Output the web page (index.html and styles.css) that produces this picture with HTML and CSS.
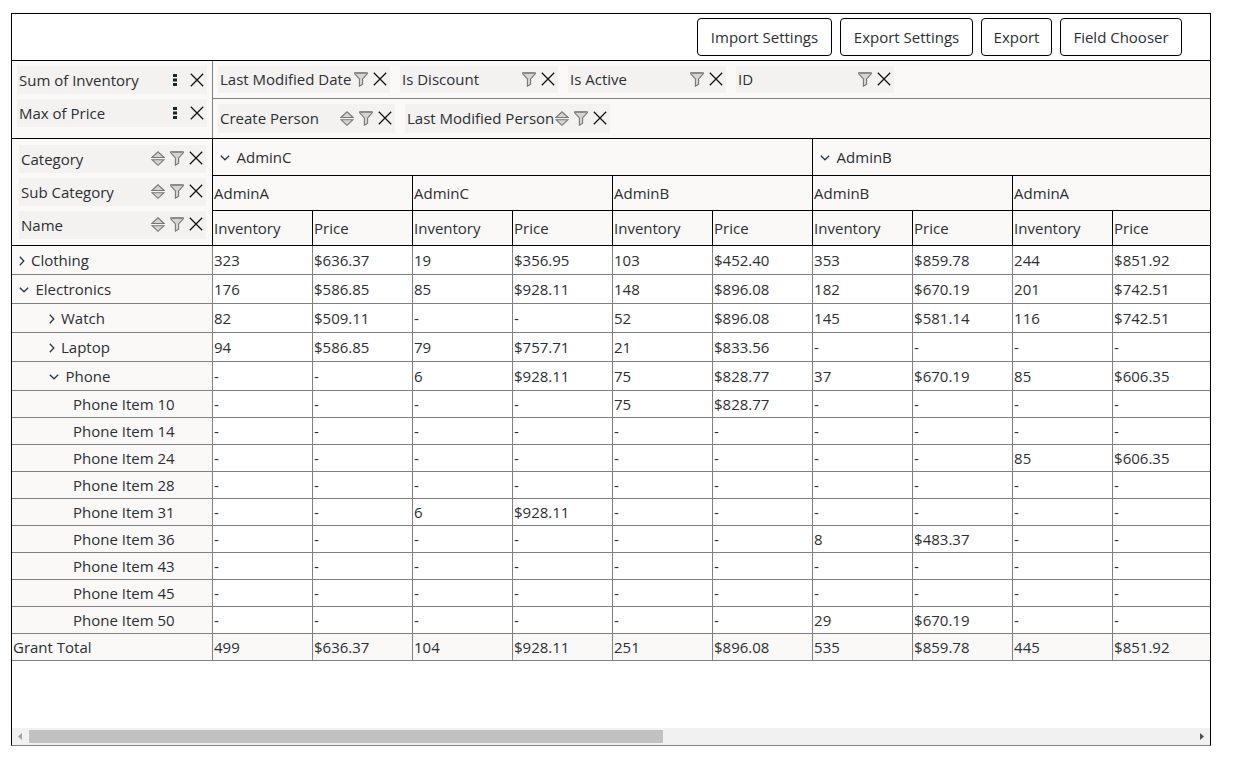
FILE: index.html
```html
<!DOCTYPE html>
<html lang="en">
<head>
<meta charset="utf-8">
<title>Pivot Table</title>
<link rel="stylesheet" href="styles.css">
</head>
<body>
<svg class="sprite" aria-hidden="true">
  <symbol id="close" viewBox="0 0 14 14"><path d="M.8.8 13.2 13.2M13.2.8.8 13.2" fill="none" stroke="#111" stroke-width="1.25"/></symbol>
  <symbol id="filter" viewBox="0 0 14 15"><path d="M.7.7H13.3V1.9L8.6 7V12.2L5.4 14.2V7L.7 1.9Z" fill="#d4d4d4" stroke="#777" stroke-width="1.1"/><path d="M1.5 1.2H12.5" stroke="#777"/></symbol>
  <symbol id="sort" viewBox="0 0 14 15"><path d="M.9 6.5 7 .8 13.1 6.5ZM.9 8.7H13.1L7 14.3Z" fill="#d4d4d4" stroke="#777" stroke-width="1.1"/></symbol>
  <symbol id="dots" viewBox="0 0 4 14"><path d="M0 1h4v3H0zM0 5.5h4v3H0zM0 10h4v3H0z" fill="#16262e"/></symbol>
  <symbol id="down" viewBox="0 0 10 6"><path d="M.8.8 5 4.8 9.2.8" fill="none" stroke="#26394c" stroke-width="1.3"/></symbol>
  <symbol id="right" viewBox="0 0 6 10"><path d="M.8.8 4.8 5 .8 9.2" fill="none" stroke="#26394c" stroke-width="1.3"/></symbol>
</svg>
<main class="pivot">
  <div class="toolbar"><button>Import Settings</button><button>Export Settings</button><button>Export</button><button>Field Chooser</button></div>
  <div class="fields">
    <div class="data-fields">
      <div class="chip"><span>Sum of Inventory</span><svg class="dots"><use href="#dots"/></svg><svg class="close"><use href="#close"/></svg></div>
      <div class="chip"><span>Max of Price</span><svg class="dots"><use href="#dots"/></svg><svg class="close"><use href="#close"/></svg></div>
    </div>
    <div class="other-fields">
      <div class="filter-fields">
        <div class="chip wide"><span>Last Modified Date</span><svg class="icon"><use href="#filter"/></svg><svg class="close"><use href="#close"/></svg></div>
        <div class="chip"><span>Is Discount</span><svg class="icon"><use href="#filter"/></svg><svg class="close"><use href="#close"/></svg></div>
        <div class="chip"><span>Is Active</span><svg class="icon"><use href="#filter"/></svg><svg class="close"><use href="#close"/></svg></div>
        <div class="chip"><span>ID</span><svg class="icon"><use href="#filter"/></svg><svg class="close"><use href="#close"/></svg></div>
      </div>
      <div class="column-fields">
        <div class="chip"><span>Create Person</span><svg class="icon"><use href="#sort"/></svg><svg class="icon"><use href="#filter"/></svg><svg class="close"><use href="#close"/></svg></div>
        <div class="chip wide"><span>Last Modified Person</span><svg class="icon"><use href="#sort"/></svg><svg class="icon"><use href="#filter"/></svg><svg class="close"><use href="#close"/></svg></div>
      </div>
    </div>
  </div>
  <table>
    <colgroup><col class="c-name"><col><col><col><col><col><col><col><col><col><col class="c-last"></colgroup>
    <thead>
      <tr class="h1"><th rowspan="3"><div class="row-fields">
        <div class="chip"><span>Category</span><svg class="icon"><use href="#sort"/></svg><svg class="icon"><use href="#filter"/></svg><svg class="close"><use href="#close"/></svg></div>
        <div class="chip"><span>Sub Category</span><svg class="icon"><use href="#sort"/></svg><svg class="icon"><use href="#filter"/></svg><svg class="close"><use href="#close"/></svg></div>
        <div class="chip"><span>Name</span><svg class="icon"><use href="#sort"/></svg><svg class="icon"><use href="#filter"/></svg><svg class="close"><use href="#close"/></svg></div>
      </div></th><th colspan="6"><svg class="down"><use href="#down"/></svg>AdminC</th><th colspan="4"><svg class="down"><use href="#down"/></svg>AdminB</th></tr>
      <tr class="h2"><th colspan="2">AdminA</th><th colspan="2">AdminC</th><th colspan="2">AdminB</th><th colspan="2">AdminB</th><th colspan="2">AdminA</th></tr>
      <tr class="h3"><th>Inventory</th><th>Price</th><th>Inventory</th><th>Price</th><th>Inventory</th><th>Price</th><th>Inventory</th><th>Price</th><th>Inventory</th><th>Price</th></tr>
    </thead>
    <tbody>
      <tr class="group"><th><svg class="right"><use href="#right"/></svg>Clothing</th><td>323</td><td>$636.37</td><td>19</td><td>$356.95</td><td>103</td><td>$452.40</td><td>353</td><td>$859.78</td><td>244</td><td>$851.92</td></tr>
      <tr class="group"><th><svg class="down"><use href="#down"/></svg>Electronics</th><td>176</td><td>$586.85</td><td>85</td><td>$928.11</td><td>148</td><td>$896.08</td><td>182</td><td>$670.19</td><td>201</td><td>$742.51</td></tr>
      <tr class="group sub"><th><svg class="right"><use href="#right"/></svg>Watch</th><td>82</td><td>$509.11</td><td>-</td><td>-</td><td>52</td><td>$896.08</td><td>145</td><td>$581.14</td><td>116</td><td>$742.51</td></tr>
      <tr class="group sub"><th><svg class="right"><use href="#right"/></svg>Laptop</th><td>94</td><td>$586.85</td><td>79</td><td>$757.71</td><td>21</td><td>$833.56</td><td>-</td><td>-</td><td>-</td><td>-</td></tr>
      <tr class="group sub"><th><svg class="down"><use href="#down"/></svg>Phone</th><td>-</td><td>-</td><td>6</td><td>$928.11</td><td>75</td><td>$828.77</td><td>37</td><td>$670.19</td><td>85</td><td>$606.35</td></tr>
      <tr class="leaf"><th>Phone Item 10</th><td>-</td><td>-</td><td>-</td><td>-</td><td>75</td><td>$828.77</td><td>-</td><td>-</td><td>-</td><td>-</td></tr>
      <tr class="leaf"><th>Phone Item 14</th><td>-</td><td>-</td><td>-</td><td>-</td><td>-</td><td>-</td><td>-</td><td>-</td><td>-</td><td>-</td></tr>
      <tr class="leaf"><th>Phone Item 24</th><td>-</td><td>-</td><td>-</td><td>-</td><td>-</td><td>-</td><td>-</td><td>-</td><td>85</td><td>$606.35</td></tr>
      <tr class="leaf"><th>Phone Item 28</th><td>-</td><td>-</td><td>-</td><td>-</td><td>-</td><td>-</td><td>-</td><td>-</td><td>-</td><td>-</td></tr>
      <tr class="leaf"><th>Phone Item 31</th><td>-</td><td>-</td><td>6</td><td>$928.11</td><td>-</td><td>-</td><td>-</td><td>-</td><td>-</td><td>-</td></tr>
      <tr class="leaf"><th>Phone Item 36</th><td>-</td><td>-</td><td>-</td><td>-</td><td>-</td><td>-</td><td>8</td><td>$483.37</td><td>-</td><td>-</td></tr>
      <tr class="leaf"><th>Phone Item 43</th><td>-</td><td>-</td><td>-</td><td>-</td><td>-</td><td>-</td><td>-</td><td>-</td><td>-</td><td>-</td></tr>
      <tr class="leaf"><th>Phone Item 45</th><td>-</td><td>-</td><td>-</td><td>-</td><td>-</td><td>-</td><td>-</td><td>-</td><td>-</td><td>-</td></tr>
      <tr class="leaf"><th>Phone Item 50</th><td>-</td><td>-</td><td>-</td><td>-</td><td>-</td><td>-</td><td>29</td><td>$670.19</td><td>-</td><td>-</td></tr>
      <tr class="total"><th>Grant Total</th><td>499</td><td>$636.37</td><td>104</td><td>$928.11</td><td>251</td><td>$896.08</td><td>535</td><td>$859.78</td><td>445</td><td>$851.92</td></tr>
    </tbody>
  </table>
  <div class="scrollbar"><svg class="arrow" viewBox="0 0 4 7"><path d="M4 0v7L0 3.5z" fill="#a3a3a3"/></svg><div class="track"><div class="thumb"></div></div><svg class="arrow" viewBox="0 0 4 7"><path d="M0 0v7l4-3.5z" fill="#505050"/></svg></div>
</main>
</body>
</html>
```
FILE: styles.css
```css
* { box-sizing: border-box; }
body { margin: 0; background: #fff; color: #2b2f33; font: 400 15px/20px "Open Sans", "Noto Sans", sans-serif; }
.sprite { display: none; }
svg { display: block; flex: none; }
.pivot { width: 1200px; height: 733px; margin: 13px 0 0 11px; border: 1px solid #000; border-bottom-color: #808080; display: flex; flex-direction: column; overflow: hidden; }
.toolbar { height: 47px; flex: none; border-bottom: 1px solid #000; display: flex; gap: 8px; justify-content: flex-end; padding: 4px 28px 0 0; }
button { height: 38px; padding: 0; width: 135px; border: 1px solid #000; border-radius: 4px; background: #fff; color: inherit; font: inherit; }
button:nth-child(2) { width: 133px; }
button:nth-child(3) { width: 71px; }
button:nth-child(4) { width: 122px; }
.fields { display: flex; height: 78px; flex: none; background: #faf9f8; border-bottom: 1px solid #000; }
.data-fields { width: 201px; border-right: 1px solid #808080; padding: 5px; display: flex; flex-direction: column; gap: 5px; }
.other-fields { flex: 1; }
.chip { display: flex; align-items: center; height: 28px; background: #f3f2f1; white-space: nowrap; padding: 0 3px 0 2px; }
.chip span { flex: 1 1 0; min-width: 0; }
.icon { width: 14px; height: 15px; margin-right: 5px; }
.close { width: 14px; height: 14px; }
.dots { width: 4px; height: 14px; margin-right: 13px; }
.filter-fields, .column-fields { display: flex; gap: 10px; padding: 5px; }
.filter-fields { height: 38px; border-bottom: 1px solid #808080; }
.filter-fields .chip { width: 158px; height: 27px; padding-bottom: 1px; }
.filter-fields .wide { width: 172px; }
.column-fields .chip { width: 177px; height: 29px; padding-bottom: 1px; }
.column-fields .wide { width: 205px; }
.row-fields { display: flex; flex-direction: column; gap: 5px; padding: 0 6px 0 7px; }
.row-fields svg { margin-bottom: 2px; }
table { table-layout: fixed; width: 1198px; border-collapse: separate; border-spacing: 0; flex: none; }
col { width: 100px; }
.c-name { width: 201px; }
.c-last { width: 97px; }
th, td { padding: 0 0 0 1px; text-align: left; font-weight: inherit; border: solid #808080; border-width: 0 1px 1px 0; white-space: nowrap; }
tr > :last-child { border-right: 0; }
th, .total td { background: #faf9f8; }
thead th { border-color: #000; }
.h1 { height: 37px; }
.h1 th:first-child { padding: 0; }
.h2, .h3 { height: 35px; }
.group { height: 29px; }
.leaf, .total { height: 27px; }
.down, .right { display: inline-block; vertical-align: 2px; }
.down { width: 10px; height: 6px; margin: 0 6.5px 0 6px; }
.right { width: 6px; height: 10px; vertical-align: 0; margin: 0 6px; }
.sub th { padding-left: 31px; }
.leaf th { padding-left: 61px; }
.scrollbar { margin-top: auto; height: 17px; flex: none; background: #f1f1f1; display: flex; align-items: center; padding: 0 6px; }
.arrow { width: 4px; height: 7px; }
.track { flex: 1; padding: 0 7px; }
.thumb { width: 634px; height: 13px; background: #c1c1c1; }
```
